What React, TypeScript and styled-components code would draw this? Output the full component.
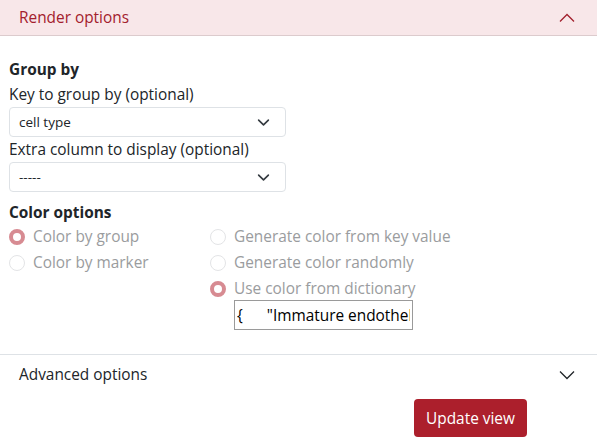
import React from "react";
import styled, { createGlobalStyle } from "styled-components";

const Global = createGlobalStyle`
  html, body { margin: 0; padding: 0; background: #fff; }
  body { font-family: "Open Sans", "Noto Sans", sans-serif; color: #212529; font-size: 15.4px; line-height: 24px; }
  * { box-sizing: border-box; }
`;

const Page = styled.div`
  width: 597px;
  height: 447px;
  overflow: hidden;
  display: flex;
  flex-direction: column;
`;

const AccordionHeader = styled.div<{ $open?: boolean }>`
  display: flex;
  align-items: center;
  justify-content: space-between;
  padding: 0 22px 0 19px;
  height: ${(p) => (p.$open ? "36px" : "42px")};
  flex: none;
  background: ${(p) => (p.$open ? "#f8e7e9" : "#fff")};
  color: ${(p) => (p.$open ? "#a3202d" : "#212529")};
  border-bottom: 1px solid ${(p) => (p.$open ? "#dccbcd" : "transparent")};
  border-top: 1px solid ${(p) => (p.$open ? "transparent" : "#dee2e6")};
`;

const HeaderTitle = styled.span`
  font-size: 15.4px;
`;

const Body = styled.div`
  padding: 22px 9px 24px 9px;
  display: flex;
  flex-direction: column;
`;

const SectionTitle = styled.div`
  font-weight: 700;
  font-size: 15.4px;
  line-height: 24px;
`;

const FieldLabel = styled.label`
  display: block;
  font-size: 15.4px;
  line-height: 25px;
`;

const SelectBox = styled.div`
  width: 277px;
  height: 30px;
  flex: none;
  border: 1px solid #dee2e6;
  border-radius: 4px;
  display: flex;
  align-items: center;
  justify-content: space-between;
  padding: 0 15px 0 9px;
  font-size: 13.5px;
  color: #212529;
`;

const TitleGap = styled.div`
  height: 9px;
`;

const RadioGrid = styled.div`
  display: grid;
  grid-template-columns: 201px auto;
  row-gap: 2px;
`;

const RadioRow = styled.div`
  display: flex;
  align-items: center;
  height: 24px;
  color: #9a9c9e;
  font-size: 15.4px;
`;

const RadioCircle = styled.span<{ $checked?: boolean }>`
  width: 16px;
  height: 16px;
  border-radius: 50%;
  margin-right: 8px;
  flex: none;
  border: ${(p) => (p.$checked ? "4px solid #d78b92" : "1px solid #e3e4e6")};
  background: #fff;
`;

const DictCell = styled.div`
  grid-column: 2;
  padding-left: 24px;
  margin-top: -3px;
`;

const DictInput = styled.input`
  width: 179px;
  height: 30px;
  border: 1px solid #9a9a9a;
  border-radius: 0;
  padding: 0 2px;
  font-family: "Open Sans", "Noto Sans", sans-serif;
  font-size: 15.4px;
  color: #000;
  outline: none;
  background: #fff;
`;

const Footer = styled.div`
  display: flex;
  justify-content: flex-end;
  padding: 3px 70px 0 0;
`;

const Button = styled.button`
  background: #ac1f2c;
  color: #fff;
  border: none;
  border-radius: 4px;
  height: 38px;
  padding: 0 12px;
  width: 113px;
  font-family: "Open Sans", "Noto Sans", sans-serif;
  font-size: 15.4px;
`;

const Chevron = ({ up, color, w = 16 }: { up?: boolean; color: string; w?: number }) => (
  <svg width={w} height={w} viewBox="0 0 16 16" fill="none">
    <path
      d={up ? "M1 11.5 L8 4.5 L15 11.5" : "M1 4.5 L8 11.5 L15 4.5"}
      stroke={color}
      strokeWidth="1.3"
    />
  </svg>
);

const SelectChevron = () => (
  <svg width="13" height="13" viewBox="0 0 16 16" fill="none">
    <path d="M2 5 L8 11 L14 5" stroke="#343a40" strokeWidth="2" strokeLinecap="round" strokeLinejoin="round" />
  </svg>
);

export default function App() {
  return (
    <Page>
      <Global />
      <AccordionHeader $open>
        <HeaderTitle>Render options</HeaderTitle>
        <Chevron up color="#a3202d" />
      </AccordionHeader>
      <Body>
        <SectionTitle>Group by</SectionTitle>
        <FieldLabel>Key to group by (optional)</FieldLabel>
        <SelectBox>
          <span>cell type</span>
          <SelectChevron />
        </SelectBox>
        <FieldLabel>Extra column to display (optional)</FieldLabel>
        <SelectBox>
          <span>-----</span>
          <SelectChevron />
        </SelectBox>
        <TitleGap />
        <SectionTitle>Color options</SectionTitle>
        <RadioGrid>
          <RadioRow>
            <RadioCircle $checked />
            Color by group
          </RadioRow>
          <RadioRow>
            <RadioCircle />
            Generate color from key value
          </RadioRow>
          <RadioRow>
            <RadioCircle />
            Color by marker
          </RadioRow>
          <RadioRow>
            <RadioCircle />
            Generate color randomly
          </RadioRow>
          <div />
          <RadioRow>
            <RadioCircle $checked />
            Use color from dictionary
          </RadioRow>
          <DictCell>
            <DictInput readOnly value={'{      "Immature endothelial cells": "#1f77b4" }'} />
          </DictCell>
        </RadioGrid>
      </Body>
      <AccordionHeader>
        <HeaderTitle>Advanced options</HeaderTitle>
        <Chevron color="#212529" />
      </AccordionHeader>
      <Footer>
        <Button>Update view</Button>
      </Footer>
    </Page>
  );
}
